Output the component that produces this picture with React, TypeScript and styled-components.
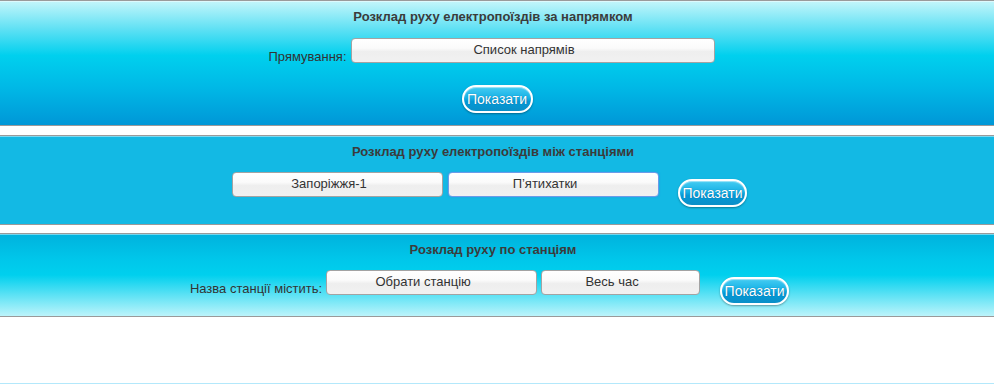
import React from 'react';
import styled, { createGlobalStyle, css } from 'styled-components';

const GlobalStyle = createGlobalStyle`
  body {
    margin: 0;
    background: #fff;
    font-family: "Liberation Sans", Arial, sans-serif;
  }
`;

const Page = styled.div`
  width: 994px;
  height: 392px;
  overflow: hidden;
`;

const gradients = {
  down: css`
    background: linear-gradient(
      to bottom,
      #c4f6fb 0%,
      #62e1f4 22%,
      #00d0ee 44%,
      #00b8e6 70%,
      #0097d7 100%
    );
  `,
  flat: css`
    background: #13b9e4;
  `,
  up: css`
    background: linear-gradient(
      to bottom,
      #00b2dd 0%,
      #00c6ea 30%,
      #00d0ee 50%,
      #72e6f6 80%,
      #bcf4fb 100%
    );
  `,
};

const Panel = styled.section<{ $kind: 'down' | 'flat' | 'up'; $height: number; $gap: number }>`
  ${(p) => gradients[p.$kind]}
  height: ${(p) => p.$height}px;
  border-top: 1px solid #9a9a9a;
  border-bottom: 1px solid #9a9a9a;
  box-shadow: inset 0 1px 0 rgba(255, 255, 255, 0.45);
  margin-bottom: ${(p) => p.$gap}px;
  padding: 8px 8px 0 0;
  box-sizing: content-box;
  display: flex;
  flex-direction: column;
  align-items: center;
`;

const Title = styled.h3`
  margin: 0;
  font-size: 13px;
  line-height: 16px;
  font-weight: bold;
  color: #3b3b3b;
`;

const Row = styled.div<{ $top: number; $shift?: number }>`
  display: flex;
  align-items: flex-start;
  margin-top: ${(p) => p.$top}px;
  margin-right: ${(p) => p.$shift || 0}px;
`;

/* label sits on the bottom edge of the select next to it */
const Label = styled.span`
  font-size: 13px;
  line-height: 15px;
  color: #333;
  margin: 11px 4px 0 0;
`;

const Select = styled.div<{ $width: number; $focused?: boolean; $gap?: number }>`
  width: ${(p) => p.$width}px;
  height: 25px;
  box-sizing: border-box;
  margin-right: ${(p) => p.$gap || 0}px;
  border: 1px solid ${(p) => (p.$focused ? '#6b9be8' : '#a3a3a3')};
  border-radius: 4px;
  background: linear-gradient(to bottom, #ffffff 0%, #fbfbfb 40%, #eeeeee 55%, #f1f1f1 100%);
  box-shadow: ${(p) => (p.$focused ? '0 0 2px rgba(70, 120, 230, 0.6)' : 'none')};
  font-size: 13px;
  line-height: 22px;
  color: #333;
  text-align: center;
  padding-right: 17px;
  white-space: nowrap;
`;

const Button = styled.button<{ $width: number; $top?: number; $left?: number }>`
  width: ${(p) => p.$width}px;
  height: 28px;
  margin-top: ${(p) => p.$top || 0}px;
  margin-left: ${(p) => p.$left || 0}px;
  padding: 0;
  border: 2px solid #ffffff;
  border-radius: 14px;
  background: linear-gradient(to bottom, #45ccf2 0%, #17b2e6 45%, #0499d6 60%, #0a8fc8 100%);
  box-shadow: 0 1px 2px rgba(0, 0, 0, 0.35), inset 0 1px 1px rgba(255, 255, 255, 0.5);
  color: #fff;
  font-family: "Liberation Sans", Arial, sans-serif;
  font-size: 14px;
  line-height: 22px;
  text-shadow: 0 0 1px rgba(0, 60, 110, 0.6);
  cursor: pointer;
`;

const Footer = styled.div`
  margin-top: 66px;
  border-top: 1px solid #b3e8fb;
`;

const App = () => {
  return (
    <Page>
      <GlobalStyle />

      <Panel $kind="down" $height={116} $gap={9}>
        <Title>Розклад руху електропоїздів за напрямком</Title>
        <Row $top={13} $shift={3}>
          <Label>Прямування:</Label>
          <Select $width={364}>Список напрямів</Select>
        </Row>
        <Row $top={21}>
          <Button $width={71} $left={8}>Показати</Button>
        </Row>
      </Panel>

      <Panel $kind="flat" $height={80} $gap={8}>
        <Title>Розклад руху електропоїздів між станціями</Title>
        <Row $top={12} $shift={7}>
          <Select $width={211} $gap={5}>Запоріжжя-1</Select>
          <Select $width={211} $gap={19} $focused>П’ятихатки</Select>
          <Button $width={69} $top={7}>Показати</Button>
        </Row>
      </Panel>

      <Panel $kind="up" $height={74} $gap={0}>
        <Title>Розклад руху по станціям</Title>
        <Row $top={12} $shift={7}>
          <Label>Назва станції містить:</Label>
          <Select $width={211} $gap={4}>Обрати станцію</Select>
          <Select $width={159} $gap={20}>Весь час</Select>
          <Button $width={69} $top={7}>Показати</Button>
        </Row>
      </Panel>

      <Footer />
    </Page>
  );
};

export default App;
